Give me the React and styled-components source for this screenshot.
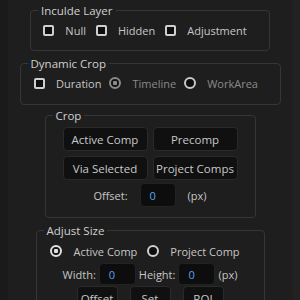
import React from "react";
import styled, { createGlobalStyle } from "styled-components";

const GlobalStyle = createGlobalStyle`
  html, body {
    margin: 0;
    height: 100%;
    overflow: hidden;
  }
  body {
    background: linear-gradient(to right, #1a1a1a 0 8px, #1e1e1e 8px 293px, #222222 293px);
    font-family: "Open Sans", "Noto Sans", sans-serif;
    font-size: 11px;
    color: #c6c6c6;
  }
`;

const Panel = styled.div`
  display: flex;
  flex-direction: column;
  align-items: center;
  padding-top: 3px;
`;

const Group = styled.fieldset`
  box-sizing: border-box;
  width: ${p => p.$w}px;
  min-width: 0;
  margin: ${p => p.$mt || 0}px 0 0;
  padding: ${p => p.$pt || 2}px 0 ${p => p.$pb || 10}px;
  border: 1px solid #363636;
  border-radius: 4px;
  display: flex;
  flex-direction: column;
  align-items: center;
`;

const Legend = styled.legend`
  margin-left: 7px;
  padding: 0 3px;
  font-size: 11.5px;
  line-height: 15px;
  color: #d0d0d0;
`;

const Row = styled.div`
  display: flex;
  align-items: center;
  justify-content: center;
  height: ${p => p.$h || 20}px;
  margin-top: ${p => p.$mt || 0}px;
  gap: ${p => p.$gap || 0}px;
`;

const Option = styled.label`
  display: inline-flex;
  align-items: center;
  gap: 11px;
  margin-right: ${p => p.$mr ?? 10}px;
  color: ${p => (p.$disabled ? "#8a8a8a" : "#c6c6c6")};
  white-space: nowrap;
`;

const Check = styled.span`
  box-sizing: border-box;
  width: 11px;
  height: 11px;
  border: 2px solid #cfcfcf;
  border-radius: 2px;
  background: #0e0e0e;
`;

const Radio = styled.span`
  box-sizing: border-box;
  width: 12px;
  height: 12px;
  border-radius: 50%;
  border: 2px solid ${p => p.$color};
  background: ${p =>
    p.$on
      ? `radial-gradient(circle, ${p.$color} 0 2px, #141414 2.5px)`
      : "#0e0e0e"};
`;

const ButtonGrid = styled.div`
  display: grid;
  grid-template-columns: 85px 85px;
  grid-auto-rows: 24px;
  gap: 5px;
`;

const Button = styled.button`
  box-sizing: border-box;
  width: ${p => (p.$w ? `${p.$w}px` : "auto")};
  height: 24px;
  padding: 0;
  border: 1px solid #2a2a2a;
  border-radius: 4px;
  background: #101010;
  color: #c8c8c8;
  font: inherit;
  font-size: 11.5px;
`;

const Field = styled.div`
  box-sizing: border-box;
  width: ${p => p.$w}px;
  height: ${p => p.$h}px;
  padding-left: 9px;
  display: flex;
  align-items: center;
  border: 1px solid #222;
  border-radius: 4px;
  background: #0d0d0d;
  color: #5aa2ec;
`;

const Text = styled.span`
  color: #c6c6c6;
  white-space: nowrap;
`;

export default function App() {
  return (
    <>
      <GlobalStyle />
      <Panel>
        <Group $w={240}>
          <Legend>Inculde Layer</Legend>
          <Row>
            <Option><Check />Null</Option>
            <Option><Check />Hidden</Option>
            <Option><Check />Adjustment</Option>
          </Row>
        </Group>

        <Group $w={261} $mt={5} $pb={11}>
          <Legend>Dynamic Crop</Legend>
          <Row>
            <Option $mr={8}><Check />Duration</Option>
            <Option $mr={8} $disabled><Radio $on $color="#8a8a8a" />Timeline</Option>
            <Option $mr={8} $disabled><Radio $color="#c8c8c8" />WorkArea</Option>
          </Row>
        </Group>

        <Group $w={211} $mt={3} $pt={4}>
          <Legend>Crop</Legend>
          <ButtonGrid>
            <Button>Active Comp</Button>
            <Button>Precomp</Button>
            <Button>Via Selected</Button>
            <Button>Project Comps</Button>
          </ButtonGrid>
          <Row $h={24} $mt={3} $gap={12}>
            <Text>Offset:</Text>
            <Field $w={36} $h={24}>0</Field>
            <Text>(px)</Text>
          </Row>
        </Group>

        <Group $w={229} $mt={5} $pt={3}>
          <Legend>Adjust Size</Legend>
          <Row>
            <Option><Radio $on $color="#e0e0e0" />Active Comp</Option>
            <Option><Radio $color="#d0d0d0" />Project Comp</Option>
          </Row>
          <Row $h={22} $mt={2} $gap={3}>
            <Text>Width:</Text>
            <Field $w={37} $h={22}>0</Field>
            <Text>Height:</Text>
            <Field $w={37} $h={22}>0</Field>
            <Text>(px)</Text>
          </Row>
          <Row $h={24} $mt={1} $gap={12}>
            <Button $w={41}>Offset</Button>
            <Button $w={41}>Set</Button>
            <Button $w={41}>ROI</Button>
          </Row>
        </Group>
      </Panel>
    </>
  );
}
